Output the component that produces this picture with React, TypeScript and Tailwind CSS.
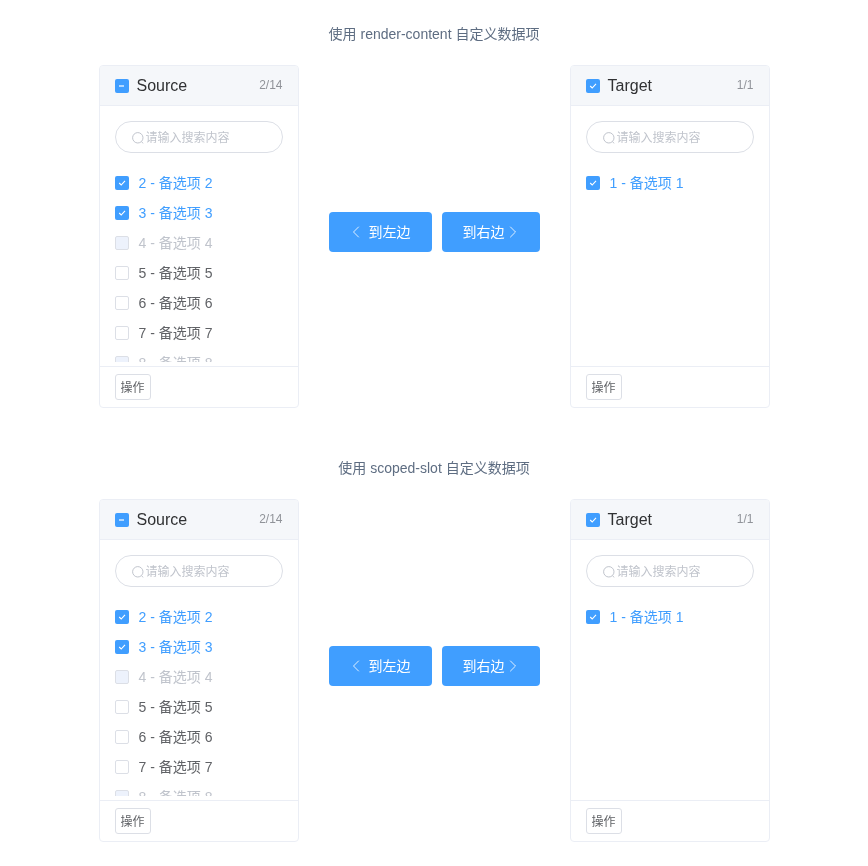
import { ChevronLeft, ChevronRight } from 'lucide-react'

type Item = { key: number; checked?: boolean; disabled?: boolean }

const sourceItems: Item[] = [
  { key: 2, checked: true },
  { key: 3, checked: true },
  { key: 4, disabled: true },
  { key: 5 },
  { key: 6 },
  { key: 7 },
  { key: 8, disabled: true },
]

const targetItems: Item[] = [{ key: 1, checked: true }]

function CheckMark() {
  return (
    <svg viewBox="0 0 14 14" className="w-[14px] h-[14px]" fill="none">
      <path d="M4.2 7 L6.2 9 L10 4.8" stroke="#fff" strokeWidth="1.1" />
    </svg>
  )
}

function Checkbox({ checked, disabled, indeterminate }: { checked?: boolean; disabled?: boolean; indeterminate?: boolean }) {
  if (indeterminate) {
    return (
      <span className="w-[14px] h-[14px] shrink-0 rounded-[2px] bg-[#409eff] flex items-center justify-center">
        <span className="w-[5px] h-[2px] bg-white/60" />
      </span>
    )
  }
  if (checked) {
    return (
      <span className="w-[14px] h-[14px] shrink-0 rounded-[2px] bg-[#409eff] flex items-center justify-center">
        <CheckMark />
      </span>
    )
  }
  return (
    <span
      className={
        disabled
          ? 'w-[14px] h-[14px] shrink-0 rounded-[2px] border border-[#dcdfe6] bg-[#edf2fc]'
          : 'w-[14px] h-[14px] shrink-0 rounded-[2px] border border-[#dcdfe6] bg-white'
      }
    />
  )
}

function SearchIcon() {
  return (
    <svg viewBox="0 0 14 14" className="w-[14px] h-[14px] shrink-0 mt-[2px]" fill="none" stroke="#c0c4cc" strokeWidth="1">
      <circle cx="6.8" cy="6.8" r="5.2" />
      <path d="M10.6 10.6 L12 12.4" />
    </svg>
  )
}

function Panel({ title, count, items, indeterminate }: { title: string; count: string; items: Item[]; indeterminate?: boolean }) {
  return (
    <div className="w-[200px] h-[343px] shrink-0 flex flex-col bg-white border border-[#ebeef5] rounded-[4px] overflow-hidden">
      <div className="h-[40px] shrink-0 flex items-center pl-[15px] pr-[15px] bg-[#f5f7fa] border-b border-[#ebeef5]">
        <Checkbox checked indeterminate={indeterminate} />
        <span className="ml-2 mt-px text-base text-[#303133]">{title}</span>
        <span className="ml-auto mb-[2px] text-xs text-[#909399]">{count}</span>
      </div>
      <div className="flex-1 min-h-0 px-[15px] pt-[15px]">
        <div className="h-[32px] flex items-center pl-[15px] rounded-full border border-[#dcdfe6]">
          <SearchIcon />
          <span className="ml-px mt-[2px] text-xs text-[#c0c4cc]">请输入搜索内容</span>
        </div>
        <div className="mt-[15px] h-[194px] overflow-hidden">
          {items.map((item) => (
            <div key={item.key} className="h-[30px] flex items-center">
              <Checkbox checked={item.checked} disabled={item.disabled} />
              <span
                className={
                  item.checked
                    ? 'ml-[10px] text-sm text-[#409eff]'
                    : item.disabled
                      ? 'ml-[10px] text-sm text-[#c0c4cc]'
                      : 'ml-[10px] text-sm text-[#606266]'
                }
              >
                {item.key} - 备选项 {item.key}
              </span>
            </div>
          ))}
        </div>
      </div>
      <div className="h-[41px] shrink-0 flex items-center pl-[15px] border-t border-[#ebeef5]">
        <button className="h-[26px] w-[36px] flex items-center justify-center pt-[2px] rounded-[3px] border border-[#dcdfe6] bg-white text-xs text-[#606266]">
          操作
        </button>
      </div>
    </div>
  )
}

function TransferDemo({ title }: { title: string }) {
  return (
    <section>
      <div className="h-[20px] flex items-center justify-center text-sm text-[#5e6d82]">{title}</div>
      <div className="mt-[21px] flex items-center justify-center">
        <Panel title="Source" count="2/14" items={sourceItems} indeterminate />
        <div className="w-[271px] shrink-0 flex justify-center gap-[10px] pl-px pb-[10px]">
          <button className="h-[40px] w-[103px] flex items-center pl-[17px] gap-[2.5px] rounded-[4px] bg-[#409eff] text-sm text-white">
            <ChevronLeft size={20} strokeWidth={1} />
            到左边
          </button>
          <button className="h-[40px] w-[98px] flex items-center pl-[20.5px] rounded-[4px] bg-[#409eff] text-sm text-white">
            到右边
            <ChevronRight size={20} strokeWidth={1} className="-ml-[1.5px]" />
          </button>
        </div>
        <Panel title="Target" count="1/1" items={targetItems} />
      </div>
    </section>
  )
}

export default function App() {
  return (
    <div
      className="min-h-[866px] pt-[24px] flex flex-col gap-[50px] will-change-transform"
      style={{ fontFamily: '"Liberation Sans", "Noto Sans CJK SC", sans-serif' }}
    >
      <TransferDemo title="使用 render-content 自定义数据项" />
      <TransferDemo title="使用 scoped-slot 自定义数据项" />
    </div>
  )
}
